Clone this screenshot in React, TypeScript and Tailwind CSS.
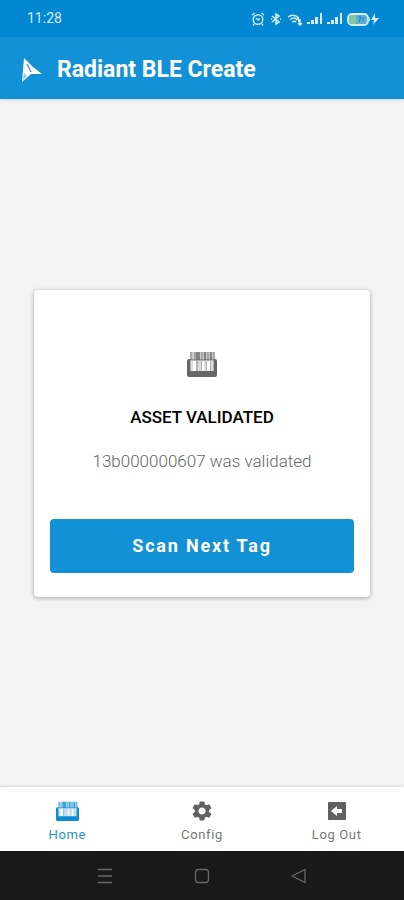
import { MdSettings } from "react-icons/md"

function AssetIcon({ className }: { className: string }) {
  return (
    <svg viewBox="0 0 30 26" className={className} fill="currentColor" aria-hidden="true">
      {/* Labels at the back */}
      <path opacity=".35" d="M3 1h25v8H3z" />
      <path opacity=".35" d="M3 1h2v8H3zM7 1h2v8H7zM14 1h2v8h-2zM20 1h2v8h-2zM26 1h2v8h-2z" />
      <path opacity=".7" d="M9 1h4v8H9zM17 1h2v8h-2zM23 1h2v8h-2z" />
      {/* Tray */}
      <path d="M2 8h1v12h24V8h1q2 0 2 2v14q0 2-2 2H2q-2 0-2-2V10q0-2 2-2z" />
      <path opacity=".5" d="M3 8h24v2H3z" />
      <path opacity=".5" d="M3 10h1v10H3zM9 10h2v10H9zM14 10h1v10h-1zM19 10h1v10h-1zM23 10h1v10h-1zM26 10h1v10h-1z" />
      <path opacity=".22" d="M4 10h2v10H4zM11 10h3v10h-3zM17 10h2v10h-2zM24 10h2v10h-2z" />
    </svg>
  )
}

function SignalIcon() {
  return (
    <svg viewBox="0 0 16 13" className="h-[13px] w-4" fill="currentColor" aria-hidden="true">
      <path d="M0 10h3v2H0zM4 8h3v4H4zM8 5h3v7H8zM13 1h2v11h-2z" />
    </svg>
  )
}

function StatusBar() {
  return (
    <div className="flex h-[37px] shrink-0 items-center justify-between bg-[#0288d3] pr-6 pl-[27px] text-[#d5ecfa]">
      <span className="text-[14px]">11:28</span>
      <div className="flex items-center gap-1">
        <svg viewBox="0 0 14 14" className="size-[14px]" fill="none" stroke="currentColor" strokeWidth="1.4" aria-hidden="true">
          <circle cx="7" cy="7.5" r="4.8" />
          <path d="M5 6l2 2 2-1M1 3l2.500-2M13 3l-2.500-2M3 12l-1 1.500M11 12l1 1.500" />
        </svg>
        <svg viewBox="0 0 14 14" className="size-[14px]" fill="none" stroke="currentColor" strokeWidth="1.6" aria-hidden="true">
          <path d="M3 4l7 6-3 2V2l3 2-7 6" />
          <path d="M2 7h1M11 7h1" />
        </svg>
        <svg viewBox="0 0 16 14" className="h-[14px] w-4" fill="none" stroke="currentColor" strokeWidth="1.5" aria-hidden="true">
          <path d="M1 5q5-4 11 1M3 7.500q4-3 7 0M5 10q2-1.500 4 0" />
          <path d="M9 8l2-2 1 4M13 7v5M11 11l2 2 2-2" />
        </svg>
        <SignalIcon />
        <SignalIcon />
        <svg viewBox="0 0 33 14" className="h-[14px] w-[33px]" fill="none" aria-hidden="true">
          <rect x="1" y="2" width="20" height="11" rx="4" fill="#5faed5" stroke="currentColor" strokeWidth="1.8" />
          <path d="M5 3h4v9H5q-3 0-3-3V6q0-3 3-3z" fill="#83c69c" />
          <path d="M11 5h3l-2 5M16 5v4" stroke="#1481c4" />
          <path d="M22 5q2 2.500 0 5z" fill="currentColor" />
          <path d="M28 1l-4 7h3l-1 5 6-7h-4z" fill="currentColor" />
        </svg>
      </div>
    </div>
  )
}

const tabs = [
  {
    label: "Home",
    color: "text-[#2196cf]",
    icon: <AssetIcon className="h-5 w-[23px] text-[#0b8bd0]" />,
  },
  {
    label: "Config",
    color: "text-[#777777]",
    icon: <MdSettings className="size-6 text-[#616161]" />,
  },
  {
    label: "Log Out",
    color: "text-[#777777]",
    icon: (
      <svg viewBox="0 0 18 18" className="size-[18px]" aria-hidden="true">
        <rect width="18" height="18" rx="1" fill="#616161" />
        <path d="M3 9l6-5v3h5v4H9v3z" fill="#fff" />
      </svg>
    ),
  },
]

export default function App() {
  return (
    <div className="flex min-h-screen flex-col bg-[#f3f3f3] font-['Roboto',sans-serif]">
      <StatusBar />

      <header className="z-10 flex h-[62px] shrink-0 items-center gap-[15px] bg-[#1391d7] px-[22px] pt-1 text-white shadow-sm">
        <svg viewBox="0 0 20 24" className="h-6 w-5" aria-hidden="true">
          <path d="M2 0Q10 9 20 16L9 16L0 24Z" fill="#fff" />
          <path d="M5 6L9 14" stroke="#43a2d5" strokeWidth="1.5" fill="none" />
          <path d="M2 15L1 22L5 18Z" fill="#8bcaeb" />
        </svg>
        <h1 className="text-[23px] font-bold">Radiant BLE Create</h1>
      </header>

      <main className="flex flex-1 flex-col justify-center px-[34px]">
        <section className="flex flex-col items-center rounded-[4px] bg-white px-4 pt-[61px] pb-6 shadow-[0_1px_4px_rgba(0,0,0,0.35)]">
          <AssetIcon className="h-[26px] w-[30px] text-[#666666]" />
          <h2 className="mt-7 text-[17px] leading-6 font-medium text-black">ASSET VALIDATED</h2>
          <p className="mt-5 text-[17px] leading-6 font-light text-[#666666]">13b000000607 was validated</p>
          <button
            type="button"
            className="mt-[46px] h-[54px] w-full rounded-[4px] bg-[#1391d7] text-[18px] font-bold tracking-widest text-white"
          >
            Scan Next Tag
          </button>
        </section>
      </main>

      <nav className="grid h-16 shrink-0 grid-cols-3 bg-white shadow-[0_-1px_2px_rgba(0,0,0,0.1)]">
        {tabs.map((tab) => (
          <a key={tab.label} href="#" className={`flex flex-col items-center pt-3 ${tab.color}`}>
            <span className="flex h-6 items-center">{tab.icon}</span>
            <span className="mt-1 text-[13px] leading-4 tracking-wider">{tab.label}</span>
          </a>
        ))}
      </nav>

      {/* Android navigation keys */}
      <div className="flex h-[49px] shrink-0 items-center justify-center gap-[73px] bg-[#191919] text-[#686868]">
        <button type="button" aria-label="Recent apps">
          <svg viewBox="0 0 24 24" className="size-6" fill="none" stroke="currentColor" strokeWidth="1.3">
            <path d="M5 5.500h14M5 12h14M5 18.500h14" />
          </svg>
        </button>
        <button type="button" aria-label="Home screen">
          <svg viewBox="0 0 24 24" className="size-6" fill="none" stroke="currentColor" strokeWidth="1.3">
            <rect x="5.500" y="5.500" width="13" height="13" rx="3" />
          </svg>
        </button>
        <button type="button" aria-label="Back">
          <svg viewBox="0 0 24 24" className="size-6" fill="none" stroke="currentColor" strokeWidth="1.3" strokeLinejoin="round">
            <path d="M5 12L18 5.500v13z" />
          </svg>
        </button>
      </div>
    </div>
  )
}
